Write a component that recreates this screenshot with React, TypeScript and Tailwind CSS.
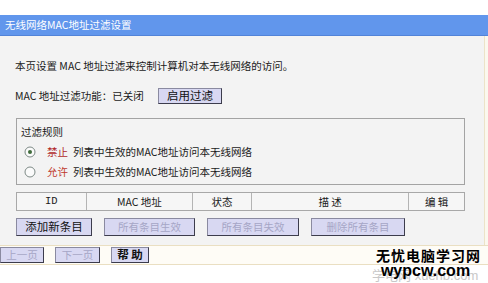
import React from "react";

const cjk = "font-['Noto_Sans_CJK_SC','Liberation_Sans',sans-serif]";

function Btn({ label, disabled, className }: { label: string; disabled?: boolean; className: string }) {
  return (
    <div
      className={`flex items-center justify-center bg-[#d8d8f2] border border-t-[#8a8aa0] border-l-[#8a8aa0] border-r-[#3c3c4c] border-b-[#3c3c4c] leading-none ${
        disabled ? "text-[#a6a6c6]" : "text-[#111]"
      } ${className}`}
    >
      {label}
    </div>
  );
}

function Radio({ checked }: { checked?: boolean }) {
  return (
    <svg width="12" height="12" viewBox="0 0 12 12" className="shrink-0">
      <circle cx="6" cy="6" r="5" fill="#fbfbfb" stroke="#7e8a86" strokeWidth="1" />
      {checked && <circle cx="6" cy="6" r="2" fill="#3f6b3a" />}
    </svg>
  );
}

export default function App() {
  const cols = [
    { label: "ID", w: "w-[70px]", mono: true },
    { label: "MAC 地址", w: "w-[107px]" },
    { label: "状态", w: "w-[59px]" },
    { label: "描 述", w: "w-[158px]" },
    { label: "编 辑", w: "w-[55px]" },
  ];
  return (
    <div className={`relative w-[488px] h-[283px] overflow-hidden bg-white text-[#1a1a1a] ${cjk}`}>
      <div className="h-[15px]" />
      <div className="h-[21px] bg-[#6196ec] border-b border-[#5283d8] flex items-center pl-[5px] text-white text-[10.5px] leading-none">
        无线网络MAC地址过滤设置
      </div>
      <div className="flex">
        <div className="w-[484px] h-[209px] bg-[#f3f3f3] flex flex-col pl-[15px] text-[10.5px]">
          <div className="mt-[24px] leading-[12px]">
            本页设置 MAC 地址过滤来控制计算机对本无线网络的访问。
          </div>
          <div className="mt-[16px] h-[16px] flex items-center">
            <span className="w-[143px]">MAC 地址过滤功能：已关闭</span>
            <Btn label="启用过滤" className="w-[64px] h-[16px] text-[11.5px]" />
          </div>
          <div className="mt-[14px] ml-px w-[449px] h-[67px] border border-[#a3a3a3] flex flex-col pl-[4px] pt-[6px]">
            <div className="leading-[13px]">过滤规则</div>
            <div className="mt-[4px] h-[20px] flex items-center pl-[3px]">
              <Radio checked />
              <span className="ml-[11px] text-[#b02a2a]">禁止</span>
              <span className="ml-[5px]">列表中生效的MAC地址访问本无线网络</span>
            </div>
            <div className="h-[20px] flex items-center pl-[3px]">
              <Radio />
              <span className="ml-[11px] text-[#c0392b]">允许</span>
              <span className="ml-[5px]">列表中生效的MAC地址访问本无线网络</span>
            </div>
          </div>
          <div className="mt-[7px] ml-px w-[449px] h-[19px] flex border border-[#a8a8a8] bg-[#f6f6f6]">
            {cols.map((c, i) => (
              <div
                key={c.label}
                className={`${c.w} flex items-center justify-center ${
                  i < cols.length - 1 ? "border-r border-[#b4b4b4]" : ""
                } ${c.mono ? "font-['Liberation_Mono',monospace]" : ""}`}
              >
                {c.label}
              </div>
            ))}
          </div>
          <div className="mt-[7px] ml-px flex gap-[12px]">
            <Btn label="添加新条目" className="w-[76px] h-[18px] text-[11.5px]" />
            <Btn label="所有条目生效" disabled className="w-[91px] h-[18px]" />
            <Btn label="所有条目失效" disabled className="w-[92px] h-[18px]" />
            <Btn label="删除所有条目" disabled className="w-[94px] h-[18px]" />
          </div>
        </div>
        <div className="w-[4px] h-[209px] bg-[#fbf8ee] border-l border-[#ece3c8]" />
      </div>
      <div className="h-[20px] bg-[#fefcf6] border-y border-[#eadfc2] flex items-center gap-[11px] text-[10.5px]">
        <Btn label="上一页" disabled className="w-[44px] h-[16px]" />
        <Btn label="下一页" disabled className="w-[45px] h-[16px]" />
        <Btn label="帮 助" className="w-[38px] h-[16px] text-[11.5px] font-bold" />
      </div>

      <div className="absolute left-[372px] top-[268px] text-[13px] leading-none text-[#c8c8c8] font-['Liberation_Sans',sans-serif] whitespace-nowrap">
        <span className={cjk}>学电网</span> xuehb.com
      </div>
      <div className="absolute left-[376px] top-[248px] flex flex-col items-center">
        <div className="text-[14px] leading-[15px] font-bold tracking-[1px] text-black">无忧电脑学习网</div>
        <div className="text-[16px] leading-[15px] font-bold text-black font-['Liberation_Sans',sans-serif] -ml-[6px]">
          wypcw.com
        </div>
      </div>
    </div>
  );
}
